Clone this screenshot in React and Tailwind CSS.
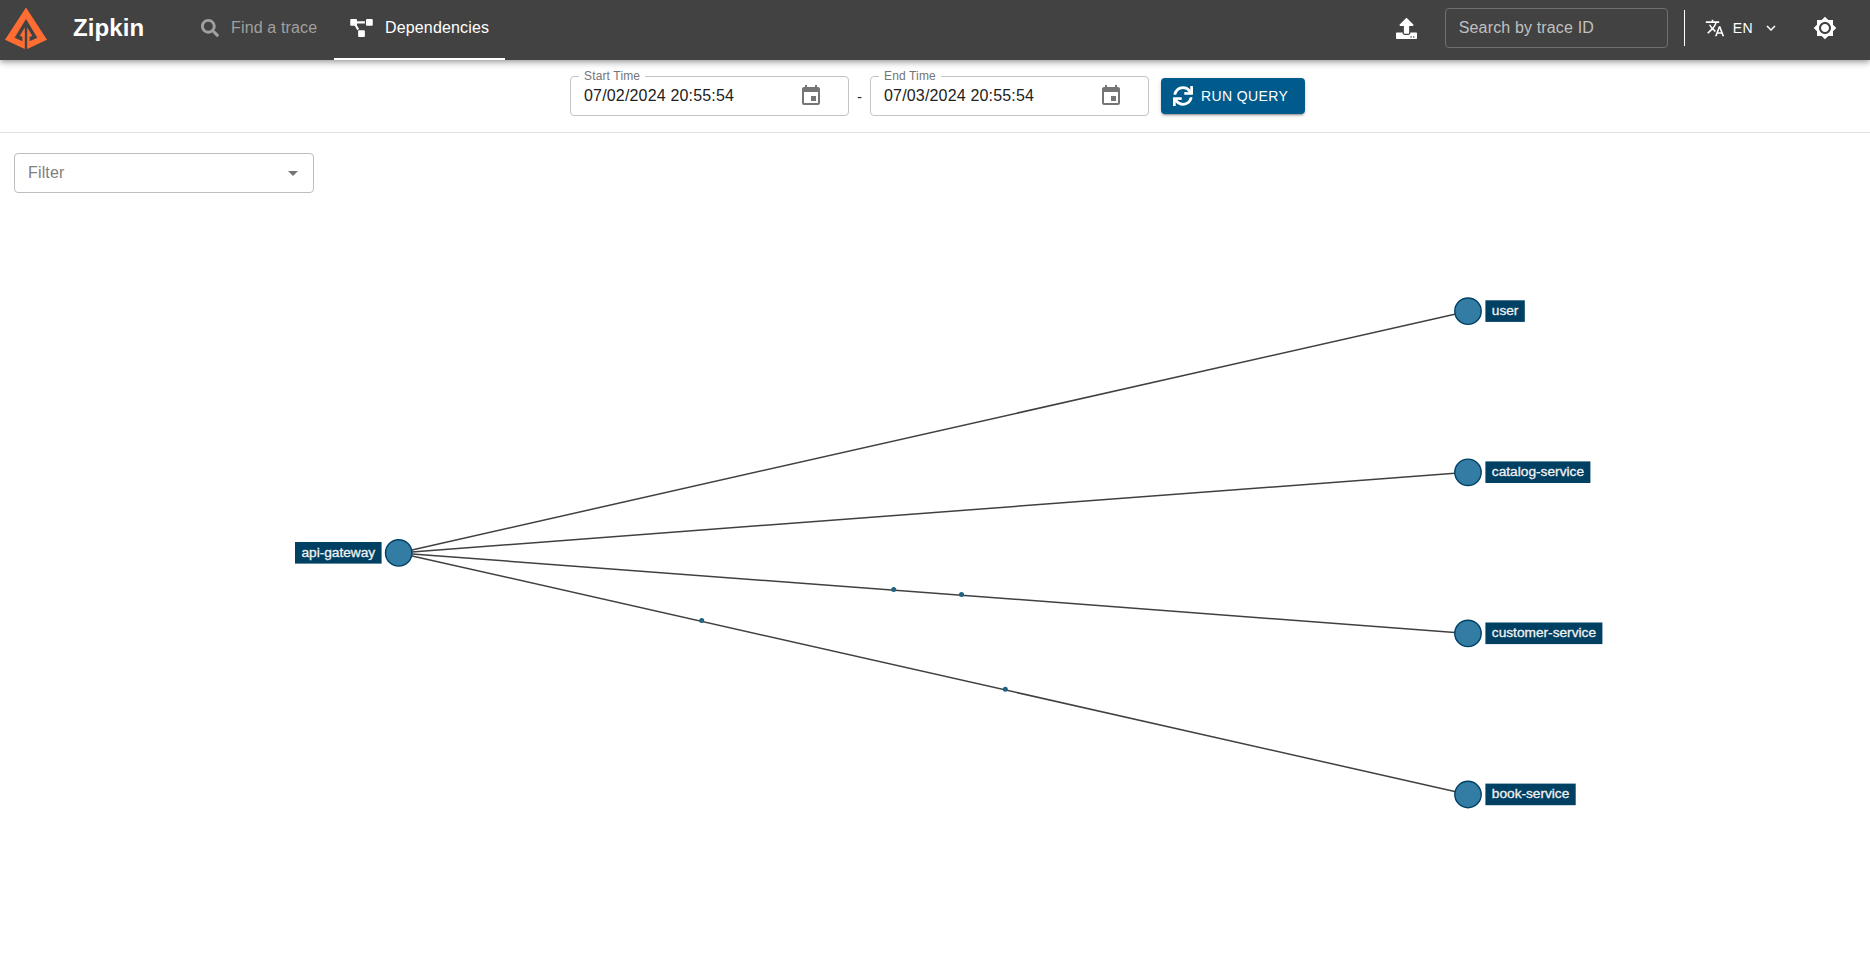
import React from 'react';
import { FaSearch, FaProjectDiagram, FaUpload, FaSync } from 'react-icons/fa';
import { MdTranslate, MdBrightness7, MdEvent, MdArrowDropDown, MdKeyboardArrowDown } from 'react-icons/md';

function Logo() {
  return (
    <svg className="ml-[5px] mt-[7px] h-[42px] w-[42px] shrink-0" viewBox="0 0 42 42" fill="#ff6d33">
      <path d="M21 .5 42 32.8 22.2 42V20.5L27.2 28.8 24.6 30V34.2L32.4 30.8 21 12 9.6 30.8 17.4 34.2V30L14.8 28.8 19.8 20.5V42L0 32.8Z" />
    </svg>
  );
}

function Header() {
  return (
    <header className="relative z-10 flex h-[60px] items-start bg-[#424242] text-white shadow-[0_2px_4px_-1px_rgba(0,0,0,0.2),0_4px_5px_0_rgba(0,0,0,0.14),0_1px_10px_0_rgba(0,0,0,0.12)]">
      <Logo />
      <h1 className="ml-[26px] mt-[12px] w-[111px] text-2xl leading-8 font-bold tracking-[0.1px]">Zipkin</h1>
      <nav className="flex h-[60px]">
        <a className="flex h-[60px] w-[150px] items-center pb-1 pl-[17px] tracking-[0.15px] text-[#a0a0a0]">
          <FaSearch className="mr-3 h-[18px] w-[18px]" />
          <span>Find a trace</span>
        </a>
        <a className="flex h-[60px] w-[171px] items-center border-b-2 border-white pb-0.5 pl-4 tracking-[0.15px]">
          <FaProjectDiagram className="mr-3 h-[18px] w-[23px]" />
          <span>Dependencies</span>
        </a>
      </nav>
      <div className="ml-auto flex h-[56px] items-center">
        <FaUpload className="mr-[28px] h-[21px] w-[21px]" />
        <div className="flex h-10 w-[223px] items-center rounded border border-[#6f6f6f] pl-[13px] tracking-[0.15px] text-[#c0c0c0]">Search by trace ID</div>
        <div className="ml-4 h-9 w-px bg-white" />
        <div className="ml-5 flex items-center text-sm tracking-[0.4px]">
          <MdTranslate className="mr-2 h-5 w-5" />
          <span>EN</span>
          <MdKeyboardArrowDown className="ml-[9px] h-[18px] w-[18px]" />
        </div>
        <MdBrightness7 className="mr-[33px] ml-[33px] h-6 w-6" />
      </div>
    </header>
  );
}

function TimeField({ label, value }) {
  return (
    <fieldset className="-mt-[5px] h-[45px] w-[279px] rounded border border-[#c4c4c4] pl-2">
      <legend className="h-[11px] px-[5px] text-xs leading-[11px] tracking-[0.15px] whitespace-nowrap text-[#757575]">{label}</legend>
      <div className="flex h-[30px] items-center pr-[25px] pl-[5px]">
        <span className="pb-0.5 tracking-[0.17px] text-[#212121]">{value}</span>
        <MdEvent className="mb-0.5 ml-auto h-6 w-6 text-[#757575]" />
      </div>
    </fieldset>
  );
}

const SOURCE = { name: 'api-gateway', x: 398.7, y: 552.9 };
const TARGETS = [
  { name: 'user', x: 1468, y: 311.2, w: 39.4 },
  { name: 'catalog-service', x: 1468, y: 472.3, w: 105 },
  { name: 'customer-service', x: 1468, y: 633.4, w: 117 },
  { name: 'book-service', x: 1468, y: 794.5, w: 90.3 },
];
const PARTICLES = [[893.7, 589.4], [961.5, 594.4], [701.7, 620.5], [1005.3, 689.2]];

function ServiceNode({ name, x, y, boxX, w }) {
  return (
    <g>
      <circle cx={x} cy={y} r="13.2" fill="#337ca3" stroke="#004267" strokeWidth="1.4" />
      <rect x={boxX} y={y - 10.9} width={w} height="21.6" fill="#004063" />
      <text x={boxX + w / 2} y={y + 3.6} textAnchor="middle" textLength={w - 12.8} fontSize="13.7" fill="#f2f2f2" stroke="#f2f2f2" strokeWidth="0.3">{name}</text>
    </g>
  );
}

function DependencyGraph() {
  return (
    <svg className="block h-[778px] w-full" viewBox="0 193 1870 778">
      {TARGETS.map((t) => (
        <line key={t.name} x1={SOURCE.x} y1={SOURCE.y} x2={t.x} y2={t.y} stroke="#404040" strokeWidth="1.5" />
      ))}
      {PARTICLES.map(([x, y]) => (
        <circle key={x} cx={x} cy={y} r="2.5" fill="#1f6283" />
      ))}
      <ServiceNode {...SOURCE} boxX={295} w={86.6} />
      {TARGETS.map((t) => (
        <ServiceNode key={t.name} {...t} boxX={1485.4} />
      ))}
    </svg>
  );
}

export default function App() {
  return (
    <div className="h-[971px] w-[1870px] overflow-hidden bg-white font-['Liberation_Sans',Arial,sans-serif] text-base">
      <Header />
      <section className="flex h-[73px] items-start border-b border-[#e0e0e0] pt-4 pl-[570px]">
        <TimeField label="Start Time" value="07/02/2024 20:55:54" />
        <span className="w-[21px] pt-[9px] text-center text-sm leading-6 text-[#212121]">-</span>
        <TimeField label="End Time" value="07/03/2024 20:55:54" />
        <button className="mt-[2px] ml-3 flex h-9 w-36 items-center rounded bg-[#005b8c] pl-3 text-sm tracking-[0.4px] text-white shadow-[0_3px_1px_-2px_rgba(0,0,0,0.2),0_2px_2px_0_rgba(0,0,0,0.14),0_1px_5px_0_rgba(0,0,0,0.12)]">
          <FaSync className="mr-2 h-5 w-5" />
          RUN QUERY
        </button>
      </section>
      <main className="pt-5">
        <div className="ml-[14px] flex h-10 w-[300px] items-center rounded border border-[#bdbdbd] pr-[8px] pl-[13px] text-[#808080]">
          <span className="tracking-[0.15px]">Filter</span>
          <MdArrowDropDown className="ml-auto h-6 w-6 text-[#757575]" />
        </div>
        <DependencyGraph />
      </main>
    </div>
  );
}
